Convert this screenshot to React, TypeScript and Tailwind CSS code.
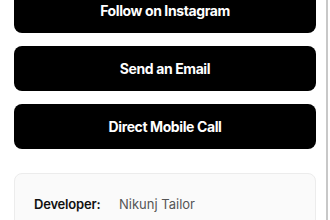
import React from 'react';

const links = ['Follow on Instagram', 'Send an Email', 'Direct Mobile Call'];

const App: React.FC = () => {
  return (
    <div className="w-[330px] h-[220px] overflow-hidden bg-white flex font-['Inter',sans-serif]">
      <div className="w-[326px] px-[14px] pr-[10px]">
        <div className="mt-[-12px] flex flex-col gap-[13px]">
          {links.map((label) => (
            <button
              key={label}
              className="h-[45px] w-full rounded-lg bg-black text-white text-[14px] font-bold tracking-[-0.4px] flex items-center justify-center"
            >
              {label}
            </button>
          ))}
        </div>

        <div className="mt-[24px] rounded-lg border border-[#ececec] bg-[#fafafa] px-[19px] pt-[21px] pb-4">
          <div className="flex items-center text-[13px]">
            <span className="w-[85px] font-semibold tracking-[-0.2px] text-[#111]">Developer:</span>
            <span className="text-[#555]">Nikunj Tailor</span>
          </div>
        </div>
      </div>
      <div className="w-[2px] h-full bg-[#c8c8c8]" />
    </div>
  );
};

export default App;
